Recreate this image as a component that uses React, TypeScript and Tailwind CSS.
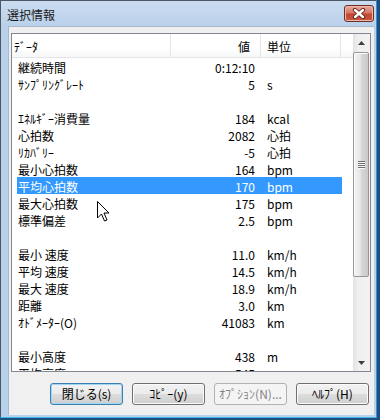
import React from "react";

type Row = [string, string, string] | null;

const rows: Row[] = [
  ["継続時間", "0:12:10", ""],
  ["ｻﾝﾌﾟﾘﾝｸﾞﾚｰﾄ", "5", "s"],
  null,
  ["ｴﾈﾙｷﾞｰ消費量", "184", "kcal"],
  ["心拍数", "2082", "心拍"],
  ["ﾘｶﾊﾞﾘｰ", "-5", "心拍"],
  ["最小心拍数", "164", "bpm"],
  ["平均心拍数", "170", "bpm"],
  ["最大心拍数", "175", "bpm"],
  ["標準偏差", "2.5", "bpm"],
  null,
  ["最小 速度", "11.0", "km/h"],
  ["平均 速度", "14.5", "km/h"],
  ["最大 速度", "18.9", "km/h"],
  ["距離", "3.0", "km"],
  ["ｵﾄﾞﾒｰﾀｰ(O)", "41083", "km"],
  null,
  ["最小高度", "438", "m"],
  ["平均高度", "545", "m"],
];

function Btn({ label, def, disabled }: { label: string; def?: boolean; disabled?: boolean }) {
  if (disabled) {
    return (
      <div className="w-[73px] h-[22px] rounded-[3px] border border-[#adb2b5] bg-[#f4f4f4] flex items-center justify-center text-[12px] text-[#838383]">
        {label}
      </div>
    );
  }
  return (
    <div
      className={
        def
          ? "w-[73px] h-[22px] rounded-[3px] border border-[#3c7fb1] shadow-[inset_0_0_0_1px_#9fd6f3] bg-[linear-gradient(to_bottom,#f2f2f2_0%,#ebebeb_50%,#dddddd_50%,#cfcfcf_100%)] flex items-center justify-center text-[12px] text-black"
          : "w-[73px] h-[22px] rounded-[3px] border border-[#707070] shadow-[inset_0_0_0_1px_#fbfbfb] bg-[linear-gradient(to_bottom,#f2f2f2_0%,#ebebeb_50%,#dddddd_50%,#cfcfcf_100%)] flex items-center justify-center text-[12px] text-black"
      }
    >
      {label}
    </div>
  );
}

function Grip() {
  return (
    <div className="flex flex-col items-center">
      <div className="w-[7px] h-[1px] bg-[#6d6d6d]" />
      <div className="w-[7px] h-[1px] bg-[#fafafa]" />
      <div className="w-[7px] h-[1px] bg-[#6d6d6d]" />
      <div className="w-[7px] h-[1px] bg-[#fafafa]" />
      <div className="w-[7px] h-[1px] bg-[#6d6d6d]" />
      <div className="w-[7px] h-[1px] bg-[#fafafa]" />
      <div className="w-[7px] h-[1px] bg-[#6d6d6d]" />
      <div className="w-[7px] h-[1px] bg-[#fafafa]" />
    </div>
  );
}

export default function App() {
  return (
    <div className="w-[380px] h-[420px] bg-[#1c4f80] overflow-hidden relative font-[family-name:'Noto_Sans_CJK_JP',sans-serif] text-black">
      <div className="w-[377px] h-[418px] bg-[linear-gradient(to_bottom,#cbdcf0_0px,#b9d1ea_26px,#b9d1ea_100%)] border-l border-t border-[#4a5866] border-r border-r-[#3a8fd6] border-b border-b-[#3fb6e6] flex flex-col">
        {/* Title bar */}
        <div className="h-[25px] flex justify-between pl-[6px] pr-[2px]">
          <div className="text-[12px] leading-[12px] pt-[8px] text-[#1a1a1a]">選択情報</div>
          <div className="mt-[4px] w-[30px] h-[17px] rounded-[3px] border border-[#6b3025] bg-[linear-gradient(to_bottom,#e9ab9d_0%,#d67867_45%,#c24732_55%,#c65a44_100%)] shadow-[inset_0_0_0_1px_#efb8ab] flex items-center justify-center">
            <svg width="14" height="11" viewBox="0 0 14 11">
              <path d="M3 2 L11 9 M11 2 L3 9" stroke="#5c2219" strokeWidth="4.2" strokeLinecap="round" />
              <path d="M3 2 L11 9 M11 2 L3 9" stroke="#ffffff" strokeWidth="2.4" strokeLinecap="round" />
            </svg>
          </div>
        </div>
        {/* Client */}
        <div className="ml-[7px] mr-[2px] h-[389px] bg-[#f0f0f0] border-l border-t border-[#a5b8cf] flex flex-col">
          {/* List box */}
          <div className="ml-[2px] mt-[6px] w-[360px] h-[339px] border border-[#828790] bg-white flex">
            <div className="w-[341px] flex flex-col overflow-hidden">
              {/* Header */}
              <div className="h-[24px] flex border-b border-[#e5e5e5] bg-[linear-gradient(to_bottom,#ffffff_0%,#ffffff_60%,#f6f7f8_100%)] text-[12px] shrink-0">
                <div className="w-[159px] border-r border-[#e5e5e5] pl-[2px] flex items-center pt-[3px]">ﾃﾞｰﾀ</div>
                <div className="w-[90px] border-r border-[#e5e5e5] pr-[10px] flex items-center justify-end pt-[3px]">値</div>
                <div className="w-[80px] border-r border-[#e5e5e5] pl-[6px] flex items-center pt-[3px]">単位</div>
                <div className="flex-1" />
              </div>
              {/* Rows */}
              <div className="flex-1 overflow-hidden pl-[5px]">
                {rows.map((r, i) => {
                  const sel = i === 7;
                  return (
                    <div
                      key={i}
                      className={
                        sel
                          ? "w-[325px] h-[17px] flex text-[12px] leading-[15px] bg-[#3399ff] text-white"
                          : "w-[325px] h-[17px] flex text-[12px] leading-[15px]"
                      }
                    >
                      <div className="w-[154px] pl-[1px] pt-[2px] whitespace-pre">{r ? r[0] : ""}</div>
                      <div className="w-[90px] pr-[6px] pt-[2px] text-right">{r ? r[1] : ""}</div>
                      <div className="w-[81px] pl-[6px] pt-[2px]">{r ? r[2] : ""}</div>
                    </div>
                  );
                })}
              </div>
            </div>
            {/* Scrollbar */}
            <div className="w-[17px] flex flex-col bg-[linear-gradient(to_right,#e3e3e3_0%,#efefef_30%,#f2f2f2_100%)]">
              <div className="h-[17px] flex items-center justify-center shrink-0">
                <svg width="7" height="4" viewBox="0 0 7 4">
                  <path d="M3.5 0 L7 4 L0 4 Z" fill="#3f3f3f" />
                </svg>
              </div>
              <div className="mt-[1px] h-[225px] w-[16px] rounded-[2px] border border-[#979797] bg-[linear-gradient(to_right,#f4f4f4_0%,#e6e6e6_45%,#d6d6d6_55%,#cacaca_100%)] shadow-[inset_1px_1px_0_#fdfdfd] flex items-center justify-center shrink-0">
                <Grip />
              </div>
              <div className="flex-1" />
              <div className="h-[17px] flex items-center justify-center shrink-0">
                <svg width="7" height="4" viewBox="0 0 7 4">
                  <path d="M0 0 L7 0 L3.5 4 Z" fill="#3f3f3f" />
                </svg>
              </div>
            </div>
          </div>
          {/* Buttons */}
          <div className="mt-[11px] pl-[41px] flex gap-[9px]">
            <Btn label="閉じる(s)" def />
            <Btn label="ｺﾋﾟｰ(y)" />
            <Btn label="ｵﾌﾟｼｮﾝ(N)..." disabled />
            <Btn label="ﾍﾙﾌﾟ(H)" />
          </div>
        </div>
      </div>
      {/* Mouse cursor */}
      <svg className="absolute left-[97px] top-[201px]" width="13" height="22" viewBox="0 0 13 22">
        <path
          d="M0.5 0.5 L0.5 17 L4.5 13 L7.5 20 L10 19 L7 12 L12 12 Z"
          fill="#ffffff"
          stroke="#000000"
          strokeWidth="1"
          strokeLinejoin="miter"
        />
      </svg>
    </div>
  );
}
